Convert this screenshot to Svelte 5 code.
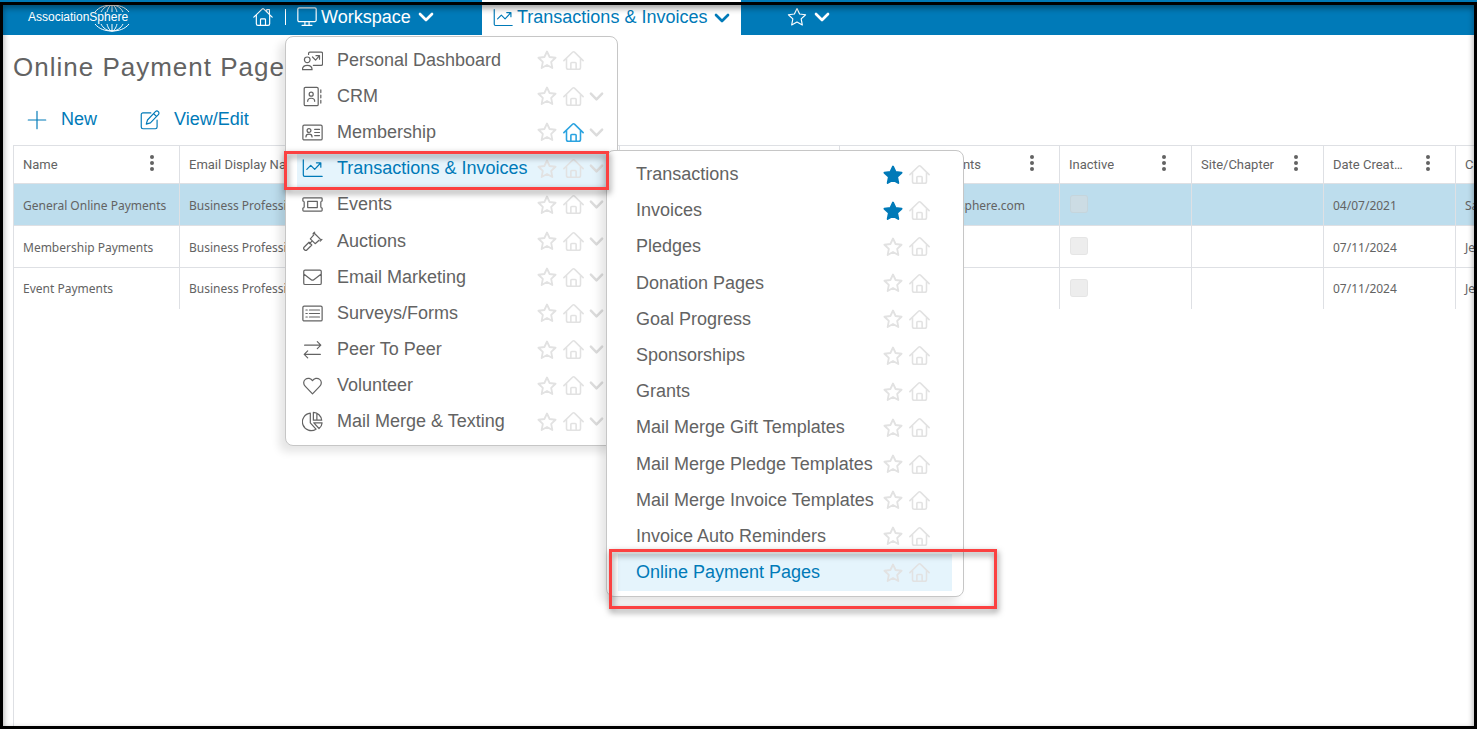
<script lang="ts">
/**
 * Online Payment Pages - grid view with the workspace menu open
 */

interface MenuItem {
  label: string;
  icon?: string;
  starred?: boolean;
  home?: boolean;
  leaf?: boolean;
  active?: boolean;
}

interface PaymentPage {
  name: string;
  displayName: string;
  replyTo: string;
  inactive: boolean;
  created: string;
  createdBy: string;
}

// Stroked icons on a 24x24 grid
const icons: Record<string, string> = {
  home: 'M1 12.2 10.900 2.500a1.600 1.600 0 0 1 2.200 0L23 12.200M4 9.800v10.200a2 2 0 0 0 2 2h12a2 2 0 0 0 2-2V9.800M9 21.500v-6.300a1 1 0 0 1 1-1h4a1 1 0 0 1 1 1v6.300',
  chimney: 'M16.5 5.5V3h3.2v5.5',
  star: 'M12 1.8 15.1 8.4 22.3 9.3 17 14.3 18.4 21.6 12 18 5.6 21.6 7 14.3 1.7 9.3 8.9 8.4Z',
  chevron: 'M3 7.5 12 16.5 21 7.5',
  monitor: 'M2.5 1h19a1.5 1.5 0 0 1 1.5 1.5v13.500a1.5 1.5 0 0 1-1.5 1.5h-19A1.5 1.5 0 0 1 1 16V2.500A1.5 1.5 0 0 1 2.5 1ZM9.5 17.500v4M14.5 17.500v4M6 22h12',
  chart: 'M1.5 2v17.5a1.5 1.5 0 0 0 1.5 1.5h20M5.500 13l4.500-4.500 4.500 4.500 6.500-7M16.500 5.500H21.500V10.500',
  dashboard: 'M7.5 5V4A1.5 1.5 0 0 1 9 2.5h13A1.5 1.5 0 0 1 23.5 4v12a1.5 1.5 0 0 1-1.5 1.5h-9M6 8a3.2 3.2 0 1 1 0 6.5A3.2 3.2 0 0 1 6 8ZM.5 22.5c0-3.5 2-5 5.5-5s5.5 1.5 5.5 5ZM12 8l3.5 3.5 4.5-5M16 6.5h4v4',
  contacts: 'M4 1.5h13A1.5 1.5 0 0 1 18.5 3v18a1.5 1.5 0 0 1-1.5 1.5H4A1.5 1.5 0 0 1 2.5 21V3A1.5 1.5 0 0 1 4 1.5ZM10.5 7a2.3 2.3 0 1 1 0 4.6 2.3 2.3 0 0 1 0-4.6ZM6.5 17.5c0-2.5 1.5-3.5 4-3.5s4 1 4 3.5M21.500 4.500v3M21.500 10.500v3M21.500 16.500v3',
  idcard: 'M2.5 3.5h19A1.5 1.5 0 0 1 23 5v14a1.5 1.5 0 0 1-1.5 1.5h-19A1.5 1.5 0 0 1 1 19V5a1.5 1.5 0 0 1 1.5-1.5ZM8 7.5a2.2 2.2 0 1 1 0 4.4 2.2 2.2 0 0 1 0-4.4ZM4.5 17c0-2.2 1.2-3.2 3.5-3.2s3.5 1 3.5 3.2M14.5 8.5H20M14.5 12H20M14.5 15.5H20',
  ticket: 'M2 4.500h20a1 1 0 0 1 1 1v2.500a1.500 1.500 0 0 0-1.500 1.500v5a1.500 1.500 0 0 0 1.500 1.500v2.500a1 1 0 0 1-1 1H2a1 1 0 0 1-1-1V16a1.500 1.500 0 0 0 1.500-1.500v-5A1.500 1.500 0 0 0 1 8V5.500a1 1 0 0 1 1-1ZM6.500 8.500h11v7h-11Z',
  gavel: 'M13.500 2 22 10.500M12.500 3.300l2-2M20.800 11.500l2-2M13.500 4.500 9.500 9l5.500 5.500 4.500-4M11.500 11.500 8.500 14.500M8 12.800l3.200 3.200-5.700 5.700a1.600 1.600 0 0 1-2.300 0l-.9-.9a1.600 1.600 0 0 1 0-2.300Z',
  mail: 'M3.5 3.5h17A1.5 1.5 0 0 1 22 5v13.5a1.5 1.5 0 0 1-1.5 1.5h-17A1.5 1.5 0 0 1 2 18.5V5a1.5 1.5 0 0 1 1.5-1.5ZM2 8l8.5 6.5a2.5 2.5 0 0 0 3 0L22 8',
  list: 'M2.5 3.5h19A1.5 1.5 0 0 1 23 5v14a1.5 1.5 0 0 1-1.5 1.5h-19A1.5 1.5 0 0 1 1 19V5a1.5 1.5 0 0 1 1.5-1.5ZM8.5 8H20M8.5 12H20M8.5 16H20M4.5 8H6M4.5 12H6M4.5 16H6',
  swap: 'M3 7h18M17.5 3 21.5 7l-4 4M21 17.5H3M6.5 13.5l-4 4 4 4',
  heart: 'M12 21.500 3.800 13C1.300 10.500 1.300 7 3.800 5c2.700-2.200 6.500-1.300 8.200 1.500 1.700-2.800 5.500-3.700 8.200-1.500 2.500 2 2.500 5.500 0 8Z',
  pie: 'M9.5 2.5A10 10 0 1 0 16 20.8L9.5 13.5ZM13 1.5A10 10 0 0 1 22.5 10.5H13ZM13.5 13.5H23a9 9 0 0 1-3.5 6.5ZM17 2.8V10',
  plus: 'M12 1.5v21M1.5 12h21',
  edit: 'M13 3.5H3.5a2 2 0 0 0-2 2v15a2 2 0 0 0 2 2h15a2 2 0 0 0 2-2V12M18.5 2a2.2 2.2 0 0 1 3.5 3.5L12.5 15.5 7.5 17l1.5-5ZM16.5 4.5l3.2 3.2'
};

const workspace: MenuItem[] = [
  { label: 'Personal Dashboard', icon: 'dashboard', leaf: true },
  { label: 'CRM', icon: 'contacts' },
  { label: 'Membership', icon: 'idcard', home: true },
  { label: 'Transactions & Invoices', icon: 'chart', active: true },
  { label: 'Events', icon: 'ticket' },
  { label: 'Auctions', icon: 'gavel' },
  { label: 'Email Marketing', icon: 'mail' },
  { label: 'Surveys/Forms', icon: 'list' },
  { label: 'Peer To Peer', icon: 'swap' },
  { label: 'Volunteer', icon: 'heart' },
  { label: 'Mail Merge & Texting', icon: 'pie' }
];

const transactions: MenuItem[] = [
  { label: 'Transactions', starred: true },
  { label: 'Invoices', starred: true },
  { label: 'Pledges' },
  { label: 'Donation Pages' },
  { label: 'Goal Progress' },
  { label: 'Sponsorships' },
  { label: 'Grants' },
  { label: 'Mail Merge Gift Templates' },
  { label: 'Mail Merge Pledge Templates' },
  { label: 'Mail Merge Invoice Templates' },
  { label: 'Invoice Auto Reminders' },
  { label: 'Online Payment Pages', active: true }
];

const columns = [
  { label: 'Name', size: 'first' },
  { label: 'Email Display Name', size: 'wide' },
  { label: '', size: 'wide' },
  { label: '', size: 'wide' },
  { label: 'Reply To For Payments', size: 'wide' },
  { label: 'Inactive', size: 'narrow' },
  { label: 'Site/Chapter', size: 'narrow' },
  { label: 'Date Created', size: 'narrow' },
  { label: 'Created By', size: 'rest' }
];

const pages: PaymentPage[] = [
  { name: 'General Online Payments', displayName: 'Business Professionals', replyTo: 'admin@associationsphere.com', inactive: false, created: '04/07/2021', createdBy: 'Sam' },
  { name: 'Membership Payments', displayName: 'Business Professionals', replyTo: '', inactive: false, created: '07/11/2024', createdBy: 'Jen' },
  { name: 'Event Payments', displayName: 'Business Professionals', replyTo: '', inactive: false, created: '07/11/2024', createdBy: 'Jen' }
];

let selected = $state(0);
</script>

{#snippet icon(name: string, cls = '')}
  <svg class="icon {cls}" viewBox="0 0 24 24" aria-hidden="true">
    <path d={icons[name]} />
  </svg>
{/snippet}

{#snippet actions(item: MenuItem)}
  <button class="mark" class:starred={item.starred} aria-label="Favorite {item.label}">{@render icon('star', 'bold')}</button>
  <button class="mark" class:home={item.home} aria-label="Set {item.label} as home">{@render icon('home', 'medium')}</button>
  <span class="expand">
    {#if item.icon && !item.leaf}{@render icon('chevron', 'heavy')}{/if}
  </span>
{/snippet}

<div class="page">
  <header class="topbar">
    <a class="brand" href="#home">
      <svg class="globe" viewBox="0 0 40 28" aria-hidden="true">
        <path d="M3 8C7 3 13 1 20 1s13 2 17 7M9 8c2-4 6-7 11-7s9 3 11 7M15 8c1-4 3-7 5-7s4 3 5 7M20 1v7M3 20c4 5 10 7 17 7s13-2 17-7M9 20c2 4 6 7 11 7s9-3 11-7M15 20c1 4 3 7 5 7s4-3 5-7M20 20v7" />
      </svg>
      <span>AssociationSphere</span>
    </a>
    <a class="home-link" href="#home" aria-label="Home">
      <svg class="icon" viewBox="0 0 24 24" aria-hidden="true">
        <path d={icons.home} />
        <path d={icons.chimney} />
      </svg>
    </a>
    <span class="divider"></span>
    <nav class="workspace">
      <button class="nav-btn">
        {@render icon('monitor')}
        <span>Workspace</span>
        {@render icon('chevron', 'heavy small')}
      </button>

      <ul class="menu">
        {#each workspace as item}
          <li class:active={item.active}>
            {@render icon(item.icon ?? '')}
            <a href="#{item.label}">{item.label}</a>
            {@render actions(item)}
            {#if item.active}
              <ul class="menu submenu">
                {#each transactions as sub}
                  <li class:active={sub.active}>
                    <a href="#{sub.label}">{sub.label}</a>
                    {@render actions(sub)}
                    {#if sub.active}<span class="callout page-callout"></span>{/if}
                  </li>
                {/each}
              </ul>
              <span class="callout section-callout"></span>
            {/if}
          </li>
        {/each}
      </ul>
    </nav>
    <button class="nav-btn current">
      {@render icon('chart')}
      <span>Transactions &amp; Invoices</span>
      {@render icon('chevron', 'heavy small')}
    </button>
    <button class="nav-btn favorites" aria-label="Favorites">
      {@render icon('star')}
      {@render icon('chevron', 'heavy small')}
    </button>
  </header>

  <main>
    <h1>Online Payment Pages</h1>
    <div class="toolbar">
      <button>{@render icon('plus')}New</button>
      <button>{@render icon('edit')}View/Edit</button>
    </div>

    <div class="grid">
      <table>
        <colgroup>
          {#each columns as column}
            <col class={column.size} />
          {/each}
        </colgroup>
        <thead>
          <tr>
            {#each columns as column}
              <th>
                <div class="head">
                  <span>{column.label}</span>
                  {#if column.size !== 'rest'}
                    <button class="dots" aria-label="Column menu">
                      <svg viewBox="0 0 4 16" aria-hidden="true">
                        <circle cx="2" cy="2" r="2" /><circle cx="2" cy="8" r="2" /><circle cx="2" cy="14" r="2" />
                      </svg>
                    </button>
                  {/if}
                </div>
              </th>
            {/each}
          </tr>
        </thead>
        <tbody>
          {#each pages as row, i}
            <tr class:selected={selected === i} onclick={() => (selected = i)}>
              <td>{row.name}</td>
              <td>{row.displayName}</td>
              <td></td>
              <td></td>
              <td>{row.replyTo}</td>
              <td class="check"><input type="checkbox" checked={row.inactive} disabled aria-label="{row.name} inactive" /></td>
              <td></td>
              <td>{row.created}</td>
              <td>{row.createdBy}</td>
            </tr>
          {/each}
        </tbody>
      </table>
    </div>
  </main>
  <div class="frame"></div>
</div>

<style>
  :global(body) {
    margin: 0;
  }

  .page {
    --blue: #007ab8;
    --text: #636363;
    position: relative;
    display: flex;
    flex-direction: column;
    min-height: 100vh;
    overflow: clip;
    background: #fff;
    color: var(--text);
    font-family: "Liberation Sans", Arial, sans-serif;
    font-size: 18px;
  }

  .page * {
    box-sizing: border-box;
  }

  button {
    padding: 0;
    border: none;
    background: none;
    color: inherit;
    font: inherit;
    cursor: pointer;
  }

  a {
    color: inherit;
    text-decoration: none;
  }

  .icon {
    flex: none;
    width: 20px;
    height: 20px;
    fill: none;
    stroke: currentColor;
    stroke-width: 1.4;
    stroke-linecap: round;
    stroke-linejoin: round;
  }

  .icon.medium {
    width: 21px;
    height: 21px;
    stroke-width: 1.8;
  }

  .icon.bold {
    stroke-width: 2.2;
  }

  .icon.heavy {
    stroke-width: 4;
  }

  .icon.small {
    width: 16px;
    height: 16px;
  }

  /* Top bar */
  .topbar {
    display: flex;
    align-items: center;
    height: 35px;
    padding-bottom: 1px;
    background: linear-gradient(var(--blue), var(--blue));
    color: #fff;
  }

  .brand {
    position: relative;
    width: 225px;
    padding-left: 28px;
    font-size: 12px;
  }

  .globe {
    position: absolute;
    top: -6px;
    left: 92px;
    width: 40px;
    height: 28px;
    fill: none;
    stroke: #fff;
  }

  .home-link {
    display: flex;
    margin-left: 28px;
  }

  .divider {
    width: 1px;
    height: 16px;
    margin: 0 11px 0 12px;
    background: #fff;
  }

  .workspace {
    position: relative;
    align-self: stretch;
    display: flex;
    width: 185px;
  }

  .nav-btn {
    display: flex;
    align-items: center;
    gap: 4px;
    white-space: nowrap;
  }

  .nav-btn .small {
    margin-left: 3px;
  }

  .nav-btn.current {
    height: 35px;
    margin-bottom: -1px;
    padding: 0 11px;
    background: #fff;
    color: var(--blue);
  }

  .nav-btn.favorites {
    margin-left: 46px;
  }

  /* Menus */
  .menu {
    position: absolute;
    z-index: 1;
    top: 36px;
    left: -12px;
    display: flex;
    flex-direction: column;
    width: 333px;
    min-height: 410px;
    margin: 0;
    padding: 5px 11px;
    border: 1px solid #c6c6c6;
    border-radius: 8px;
    background: #fff;
    box-shadow: -6px 6px 8px rgba(0, 0, 0, 0.1);
    color: var(--text);
    list-style: none;
  }

  .menu li {
    position: relative;
    flex: 1 0 36px;
    display: flex;
    align-items: center;
    padding-left: 5px;
  }

  .menu li > .icon {
    width: 21px;
    height: 21px;
    margin-right: 14px;
  }

  .menu a {
    flex: 1;
    white-space: nowrap;
  }

  .menu .active {
    background: #e5f4fc;
  }

  .menu .active > a,
  .menu .active > .icon {
    color: var(--blue);
  }

  .submenu {
    top: -1px;
    left: 100%;
    width: 358px;
    min-height: 447px;
    padding: 6px 11px 5px;
  }

  .submenu li {
    padding-left: 18px;
  }

  .mark {
    display: flex;
    margin-left: 6px;
    color: #e2e2e2;
  }

  .mark.starred {
    color: var(--blue);
  }

  .mark.starred .icon {
    fill: currentColor;
  }

  .mark.home {
    color: #2ba3e0;
  }

  .expand {
    display: flex;
    width: 22px;
    padding-left: 5px;
    color: #dcdcdc;
  }

  .expand .icon {
    width: 15px;
    height: 15px;
  }

  .callout {
    position: absolute;
    z-index: 2;
    border: 3px solid #fb4141;
    filter: drop-shadow(1px 3px 3px rgba(0, 0, 0, 0.5));
    pointer-events: none;
  }

  .section-callout {
    inset: 0 -3px -3px -13px;
  }

  .page-callout {
    inset: -5px -45px -18px -9px;
  }

  /* Content */
  main {
    flex: 1;
    display: flex;
    flex-direction: column;
    padding-left: 13px;
  }

  h1 {
    margin: 0;
    padding-top: 16px;
    font-size: 26px;
    font-weight: 400;
    line-height: 32px;
    letter-spacing: 1px;
  }

  .toolbar {
    display: flex;
    gap: 43px;
    padding: 25px 14px 14px;
    color: var(--blue);
  }

  .toolbar button {
    display: flex;
    align-items: center;
    gap: 14px;
    line-height: 23px;
  }

  .grid {
    flex: 1;
    overflow: hidden;
    border-top: 1px solid #dee0e4;
    border-left: 1px solid #dee0e4;
  }

  table {
    width: 100%;
    table-layout: fixed;
    border-collapse: separate;
    border-spacing: 0;
    font-family: "Noto Sans", "Segoe UI", sans-serif;
    font-size: 12px;
  }

  .first {
    width: 166px;
  }

  .wide {
    width: 220px;
  }

  .narrow {
    width: 132px;
  }

  th,
  td {
    overflow: hidden;
    padding: 0 0 0 9px;
    border-right: 1px solid #dee0e4;
    border-bottom: 1px solid #dee0e4;
    font-weight: 400;
    text-align: left;
    white-space: nowrap;
  }

  th:last-child,
  td:last-child {
    border-right: none;
  }

  th {
    height: 38px;
    font-family: Roboto, sans-serif;
    font-size: 13px;
  }

  td {
    height: 42px;
    padding-top: 2px;
  }

  td.check {
    padding-top: 0;
  }

  tr:last-child td {
    height: 41px;
    padding-top: 0;
    border-bottom: none;
  }

  .selected td {
    background: #bddded;
  }

  .head {
    display: flex;
    align-items: center;
    justify-content: space-between;
    padding-right: 25px;
  }

  .head span {
    overflow: hidden;
    text-overflow: ellipsis;
  }

  .dots {
    display: flex;
    margin: 0 0 4px 19px;
  }

  .dots svg {
    width: 4px;
    height: 16px;
    fill: var(--text);
  }

  th:last-child .head {
    padding: 0;
  }

  th:last-child span {
    text-overflow: clip;
  }

  input {
    display: block;
    width: 18px;
    height: 18px;
    margin: 0 0 1px 1px;
    appearance: none;
    border: 1px solid rgba(0, 0, 0, 0.03);
    border-radius: 3px;
    background: rgba(220, 220, 220, 0.5);
  }

  /* Window outline */
  .frame {
    position: absolute;
    z-index: 3;
    inset: 2px 0 0;
    border: 3px solid #000;
    box-shadow: inset 0 3px 6px rgba(0, 0, 0, 0.4);
    pointer-events: none;
  }
</style>
